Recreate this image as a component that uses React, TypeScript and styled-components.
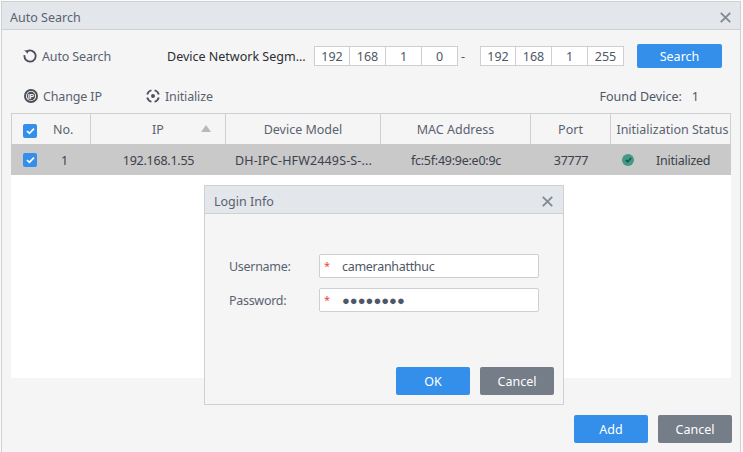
import React from "react";
import styled, { createGlobalStyle } from "styled-components";

const Global = createGlobalStyle`
  html, body { margin: 0; padding: 0; background: #fbfbfb; }
  * { box-sizing: border-box; }
  body { font-family: "Noto Sans", "Open Sans", "Liberation Sans", sans-serif; font-size: 12.5px; color: #4e5766; }
`;

const Page = styled.div`
  position: relative;
  width: 743px;
  height: 452px;
  overflow: hidden;
  padding: 1px 2px 0 1px;
`;
const Window = styled.div`
  width: 740px;
  height: 451px;
  border: 1px solid #cfd0d2;
  border-bottom: 0;
  background: #f5f5f5;
  display: flex;
  flex-direction: column;
`;
const TitleBar = styled.div<{ $left: number; $right: number }>`
  height: 28px;
  flex: none;
  background: #e3e6ea;
  border-bottom: 1px solid #cfd0d2;
  display: flex;
  align-items: center;
  justify-content: space-between;
  padding: 3px ${(p) => p.$right}px 0 ${(p) => p.$left}px;
  font-size: 12.5px;
  color: #5a6270;
`;
const Close = styled.svg`
  width: 11px;
  height: 11px;
  stroke: #848a92;
  stroke-width: 1.9;
  fill: none;
  display: block;
`;
const SearchRow = styled.div`
  height: 24px;
  margin-top: 14px;
  display: flex;
  align-items: center;
  padding-left: 21px;
`;
const IconLabel = styled.div<{ $w?: number }>`
  display: flex;
  align-items: center;
  gap: 5px;
  width: ${(p) => (p.$w ? `${p.$w}px` : "auto")};
  flex: none;
  color: #5a6270;
  white-space: nowrap;
  letter-spacing: -0.15px;
`;
const Segment = styled.span`
  width: 147px;
  flex: none;
  color: #2b2f36;
  white-space: nowrap;
`;
const IpGroup = styled.div`
  display: flex;
  flex: none;
`;
const IpCell = styled.div`
  width: 36px;
  height: 20px;
  background: #fff;
  border: 1px solid #cdcfd2;
  border-left-width: 0;
  &:first-child { border-left-width: 1px; }
  display: flex;
  align-items: center;
  justify-content: center;
  color: #4e5766;
`;
const Dash = styled.span`
  width: 22px;
  flex: none;
  padding-left: 3px;
`;
const Btn = styled.button<{ $kind: "blue" | "gray"; $w: number; $h: number }>`
  width: ${(p) => p.$w}px;
  height: ${(p) => p.$h}px;
  flex: none;
  background: ${(p) => (p.$kind === "blue" ? "#338fea" : "#757d88")};
  color: #fff;
  border: 0;
  border-radius: 2px;
  padding: 0;
  font: inherit;
  font-size: 12.5px;
`;
const SearchBtn = styled(Btn)`
  margin-left: 13px;
`;
const ActionRow = styled.div`
  height: 24px;
  margin-top: 16px;
  display: flex;
  align-items: center;
  padding: 0 41px 0 22px;
`;
const Found = styled.div`
  margin-left: auto;
  display: flex;
  gap: 10px;
  color: #4e5766;
`;
const Table = styled.div`
  width: 720px;
  height: 265px;
  margin: 5px 0 0 9px;
  background: #fff;
  flex: none;
`;
const Row = styled.div<{ $head?: boolean }>`
  display: grid;
  grid-template-columns: 80px 135px 155px 150px 80px 120px;
  height: 31px;
  background: ${(p) => (p.$head ? "#f5f5f5" : "#c9c9c9")};
  border-top: ${(p) => (p.$head ? "1px solid #cfd0d2" : "0")};
  color: ${(p) => (p.$head ? "#5a6270" : "#3c424c")};
`;
const Cell = styled.div<{ $head?: boolean; $spacing?: number }>`
  position: relative;
  display: flex;
  align-items: center;
  justify-content: center;
  white-space: nowrap;
  padding-top: 1px;
  letter-spacing: ${(p) => p.$spacing ?? 0}px;
  border-right: ${(p) => (p.$head ? "1px solid #cfd0d2" : "0")};
  &:first-child { border-left: ${(p) => (p.$head ? "1px solid #cfd0d2" : "0")}; }
`;
const StatusHead = styled(Cell)`
  padding-left: 4px;
`;
const CheckCell = styled(Cell)<{ $gap: number; $pad: number }>`
  justify-content: flex-start;
  padding-left: ${(p) => p.$pad}px;
  gap: ${(p) => p.$gap}px;
`;
const SortArrow = styled.svg`
  position: absolute;
  right: 14px;
  top: 11px;
  width: 10px;
  height: 7px;
  fill: #b5b9c0;
`;
const Check = styled.span<{ $offset?: number }>`
  width: 14px;
  height: 14px;
  flex: none;
  background: #338fea;
  border-radius: 2px;
  display: flex;
  align-items: center;
  justify-content: center;
  margin-top: ${(p) => p.$offset ?? 0}px;
`;
const StatusCell = styled(Cell)`
  justify-content: flex-start;
  padding-left: 11px;
  gap: 22px;
`;
const StatusDot = styled.span`
  width: 12px;
  height: 12px;
  border-radius: 50%;
  background: #3f9b81;
  display: flex;
  align-items: center;
  justify-content: center;
`;
const Footer = styled.div`
  display: flex;
  justify-content: flex-end;
  gap: 10px;
  margin-top: 37px;
  padding-right: 8px;
`;
const Dialog = styled.div`
  position: absolute;
  left: 204px;
  top: 185px;
  width: 360px;
  height: 220px;
  background: #f5f5f5;
  border: 1px solid #cfd0d2;
  display: flex;
  flex-direction: column;
`;
const Form = styled.div`
  display: flex;
  flex-direction: column;
  gap: 10px;
  padding: 40px 24px 0 24px;
`;
const FormRow = styled.div`
  display: flex;
  align-items: center;
`;
const FormLabel = styled.label`
  width: 90px;
  color: #5a6270;
  letter-spacing: -0.3px;
`;
const Field = styled.div`
  width: 220px;
  height: 24px;
  background: #fff;
  border: 1px solid #cdcfd2;
  border-radius: 2px;
  display: flex;
  align-items: center;
  color: #4e5766;
  letter-spacing: -0.3px;
`;
const Star = styled.span`
  color: #f5423d;
  width: 22px;
  padding: 0 0 2px 4px;
  font-size: 11px;
  flex: none;
`;
const Dots = styled.span`
  font-size: 13px;
  letter-spacing: 0;
  color: #4e5766;
`;
const DialogFooter = styled.div`
  display: flex;
  justify-content: flex-end;
  gap: 10px;
  margin-top: auto;
  padding: 0 9px 9px 0;
`;

const X = () => (
  <Close viewBox="0 0 11 11"><path d="M.8.8l9.4 9.4M10.2.8L.8 10.2" /></Close>
);
const Tick = () => (
  <svg width="9" height="8" viewBox="0 0 9 8" fill="none" stroke="#fff" strokeWidth="1.7"><path d="M1 4l2.4 2.4L8 1.6" /></svg>
);

export default function App() {
  return (
    <Page>
      <Global />
      <Window>
        <TitleBar $left={8} $right={9}>Auto Search<X /></TitleBar>
        <SearchRow>
          <IconLabel $w={144}>
            <svg width="14" height="14" viewBox="0 0 14 14" fill="none" stroke="#4a4f57" strokeWidth="1.8">
              <path d="M4.2 2.2A5.6 5.6 0 1 1 1.5 6.2" />
              <path d="M1.2 1.2l4.4.2-.9 3.4z" fill="#4a4f57" stroke="none" />
            </svg>
            Auto Search
          </IconLabel>
          <Segment>Device Network Segm...</Segment>
          <IpGroup>{["192", "168", "1", "0"].map((v, i) => <IpCell key={i}>{v}</IpCell>)}</IpGroup>
          <Dash>-</Dash>
          <IpGroup>{["192", "168", "1", "255"].map((v, i) => <IpCell key={i}>{v}</IpCell>)}</IpGroup>
          <SearchBtn $kind="blue" $w={85} $h={24}>Search</SearchBtn>
        </SearchRow>
        <ActionRow>
          <IconLabel $w={122}>
            <svg width="14" height="14" viewBox="0 0 14 14">
              <circle cx="7" cy="7" r="7" fill="#4a4f57" />
              <circle cx="7" cy="7" r="5.1" fill="#f5f5f5" />
              <circle cx="7" cy="7" r="4.2" fill="#4a4f57" />
              <text x="7" y="9.6" textAnchor="middle" fontSize="7" fontWeight="700" fill="#f5f5f5" fontFamily="Liberation Sans">IP</text>
            </svg>
            Change IP
          </IconLabel>
          <IconLabel>
            <svg width="14" height="14" viewBox="0 0 15 15" fill="none" stroke="#4a4f57" strokeWidth="1.9">
              <path d="M5.84 1.32A6.4 6.4 0 0 0 1.32 5.84M9.16 1.32A6.4 6.4 0 0 1 13.68 5.84M13.68 9.16A6.4 6.4 0 0 1 9.16 13.68M5.84 13.68A6.4 6.4 0 0 1 1.32 9.16" />
              <circle cx="7.5" cy="7.5" r="2.1" fill="#4a4f57" stroke="none" />
            </svg>
            Initialize
          </IconLabel>
          <Found><span>Found Device:</span><span>1</span></Found>
        </ActionRow>
        <Table>
          <Row $head>
            <CheckCell $head $gap={16} $pad={11}><Check $offset={3}><Tick /></Check>No.</CheckCell>
            <Cell $head>IP<SortArrow viewBox="0 0 10 7"><path d="M5 0l5 7H0z" /></SortArrow></Cell>
            <Cell $head>Device Model</Cell>
            <Cell $head>MAC Address</Cell>
            <Cell $head>Port</Cell>
            <StatusHead $head>Initialization Status</StatusHead>
          </Row>
          <Row>
            <CheckCell $gap={24} $pad={12}><Check><Tick /></Check>1</CheckCell>
            <Cell $spacing={-0.25}>192.168.1.55</Cell>
            <Cell $spacing={0.15}>DH-IPC-HFW2449S-S-...</Cell>
            <Cell $spacing={-0.25}>fc:5f:49:9e:e0:9c</Cell>
            <Cell $spacing={-0.25}>37777</Cell>
            <StatusCell $spacing={-0.25}>
              <StatusDot>
                <svg width="7" height="6" viewBox="0 0 7 6" fill="none" stroke="#26445c" strokeWidth="1.3"><path d="M.8 3l1.8 1.8L6.2 1" /></svg>
              </StatusDot>
              Initialized
            </StatusCell>
          </Row>
        </Table>
        <Footer>
          <Btn $kind="blue" $w={74} $h={28}>Add</Btn>
          <Btn $kind="gray" $w={74} $h={28}>Cancel</Btn>
        </Footer>
      </Window>
      <Dialog>
        <TitleBar $left={9} $right={10}>Login Info<X /></TitleBar>
        <Form>
          <FormRow>
            <FormLabel>Username:</FormLabel>
            <Field><Star>*</Star>cameranhatthuc</Field>
          </FormRow>
          <FormRow>
            <FormLabel>Password:</FormLabel>
            <Field><Star>*</Star><Dots>●●●●●●●●</Dots></Field>
          </FormRow>
        </Form>
        <DialogFooter>
          <Btn $kind="blue" $w={74} $h={28}>OK</Btn>
          <Btn $kind="gray" $w={74} $h={28}>Cancel</Btn>
        </DialogFooter>
      </Dialog>
    </Page>
  );
}
